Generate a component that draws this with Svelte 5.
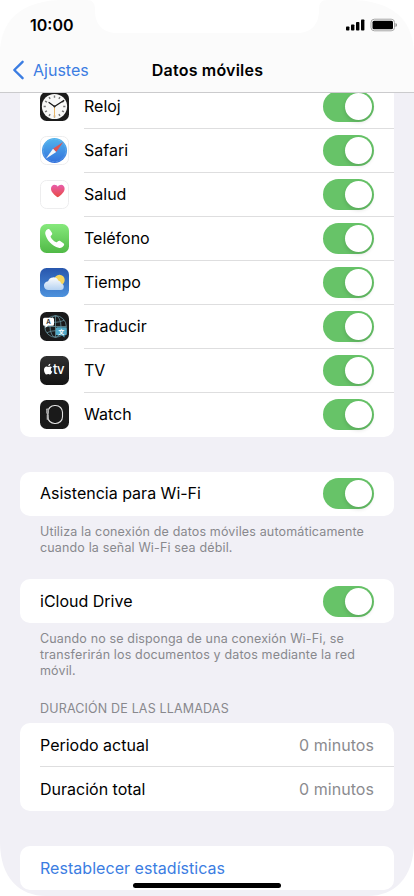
<script lang="ts">
  const apps = [
    {id: 'clock', name: 'Reloj'},
    {id: 'safari', name: 'Safari'},
    {id: 'health', name: 'Salud'},
    {id: 'phone', name: 'Teléfono'},
    {id: 'weather', name: 'Tiempo'},
    {id: 'translate', name: 'Traducir'},
    {id: 'tv', name: 'TV'},
    {id: 'watch', name: 'Watch'}
  ]

  const calls = [
    {label: 'Periodo actual', value: '0 minutos'},
    {label: 'Duración total', value: '0 minutos'}
  ]

  let enabled: Record<string, boolean> = $state({
    clock: true,
    safari: true,
    health: true,
    phone: true,
    weather: true,
    translate: true,
    tv: true,
    watch: true,
    wifi: true,
    icloud: true
  })

  const hours = [0, 30, 60, 90, 120, 150, 180, 210, 240, 270, 300, 330]
</script>

{#snippet toggle(id: string, label: string)}
  <button
    class="toggle"
    class:on={enabled[id]}
    role="switch"
    aria-checked={enabled[id]}
    aria-label={label}
    onclick={() => (enabled[id] = !enabled[id])}
  >
    <span class="knob"></span>
  </button>
{/snippet}

{#snippet icon(id: string)}
  <svg class="icon" viewBox="0 0 29 29">
    {#if id === 'clock'}
      <rect width="29" height="29" rx="6.5" fill="#1b1b1b" />
      <circle cx="14.5" cy="14.5" r="12.6" fill="#f8f8f7" />
      {#each hours as angle}
        <path
          d="M14.5 3.6v2.2"
          stroke="#777"
          stroke-width="1.4"
          transform="rotate({angle} 14.5 14.5)"
        />
      {/each}
      <path d="M14.5 14.5v10.8" stroke="#e9b668" stroke-width="1" />
      <path
        d="M9 10.5l5.5 4 9.3-6"
        fill="none"
        stroke="#151515"
        stroke-width="1.2"
        stroke-linecap="round"
      />
      <circle cx="14.5" cy="14.5" r="1" fill="#222" />
    {:else if id === 'safari'}
      <defs>
        <linearGradient id="sea" x2="0" y2="1">
          <stop stop-color="#52b5ed" />
          <stop offset="1" stop-color="#3370dc" />
        </linearGradient>
      </defs>
      <rect x=".5" y=".5" width="28" height="28" rx="6" fill="#fff" stroke="#ededee" />
      <circle cx="14.5" cy="14.5" r="12.5" fill="url(#sea)" />
      <circle
        cx="14.5"
        cy="14.5"
        r="11.2"
        fill="none"
        stroke="#86bff0"
        stroke-width=".8"
        stroke-dasharray=".5 .9"
      />
      <path d="M23.2 6L13 12.8l3.2 3.3z" fill="#df5551" />
      <path d="M5.8 22.8L13 12.8l3.2 3.3z" fill="#f5f7fa" />
    {:else if id === 'health'}
      <defs>
        <linearGradient id="heart" x2="0" y2="1">
          <stop stop-color="#e85dab" />
          <stop offset="1" stop-color="#e84b43" />
        </linearGradient>
      </defs>
      <rect x=".5" y=".5" width="28" height="28" rx="6" fill="#fff" stroke="#ededee" />
      <path
        d="M17.8 17.3C14.3 14.8 11 12 11 8.7c0-2.2 1.5-3.9 3.5-3.9 1.5 0 2.6.7 3.3 1.9.7-1.2 1.900-1.900 3.300-1.900 2.100 0 3.500 1.700 3.500 3.900 0 3.300-3.300 6.100-6.800 8.600z"
        fill="url(#heart)"
      />
    {:else if id === 'phone'}
      <defs>
        <linearGradient id="call" x2="0" y2="1">
          <stop stop-color="#86e97c" />
          <stop offset="1" stop-color="#50b946" />
        </linearGradient>
      </defs>
      <rect width="29" height="29" rx="6.5" fill="url(#call)" />
      <path
        d="M7.6 5.3c.8-.6 1.7-.4 2.3.4l2 3c.5.8.4 1.5-.2 2.2l-.8.9c-.4.5-.4.9-.1 1.400 1.100 1.900 2.900 3.700 4.900 4.900.5.300.9.300 1.400-.1l.9-.7c.7-.6 1.400-.7 2.200-.2l3.200 2.100c.8.600 1 1.500.4 2.300-1.200 1.900-3 2.900-5.200 2.300C12 21.800 6.700 16.200 5.300 9.900c-.4-1.900.6-3.600 2.300-4.600z"
        fill="#fff"
      />
    {:else if id === 'weather'}
      <defs>
        <linearGradient id="sky" x2="0" y2="1">
          <stop stop-color="#2856ad" />
          <stop offset="1" stop-color="#4d92dd" />
        </linearGradient>
        <linearGradient id="cloud" x2="0" y2="1">
          <stop stop-color="#fcfcfc" />
          <stop offset="1" stop-color="#b5d2f2" />
        </linearGradient>
      </defs>
      <rect width="29" height="29" rx="6.5" fill="url(#sky)" />
      <circle cx="19.5" cy="12" r="5.2" fill="#f6d55e" />
      <path
        d="M8.6 22a4.4 4.4 0 0 1-.5-8.8 5.5 5.5 0 0 1 10.2-.7 3.8 3.8 0 0 1 2.9 3 3.3 3.3 0 0 1-.4 6.5z"
        fill="url(#cloud)"
      />
    {:else if id === 'translate'}
      <rect width="29" height="29" rx="6.5" fill="#1a1a1b" />
      <g fill="none" stroke="#67939e" stroke-width=".8">
        <circle cx="15.5" cy="14.5" r="10.8" />
        <ellipse cx="15.5" cy="14.5" rx="5.5" ry="10.8" />
        <path d="M15.5 3.7v21.6M4.7 14.5h21.6M7 8.3q8.500 4 17 0M7 20.700q8.500-4 17 0" />
      </g>
      <path
        d="M4.5 5.8h8q1.500 0 1.500 1.500v5q0 1.500-1.500 1.500H8l-2.700 2.300v-2.300h-.8Q3 13.800 3 12.300v-5q0-1.500 1.500-1.500z"
        fill="#fff"
      />
      <text x="8.5" y="12.1" font-size="6" font-weight="700" text-anchor="middle" fill="#333">A</text>
      <path
        d="M17.3 15.3h8q1.500 0 1.500 1.500v5q0 1.500-1.500 1.500h-.8v2.300l-2.700-2.300h-4.500q-1.500 0-1.500-1.500v-5q0-1.500 1.500-1.500z"
        fill="#51a9c7"
      />
      <text class="han" x="21.3" y="21.6" font-size="6" font-weight="700" text-anchor="middle" fill="#fff">文</text>
    {:else if id === 'tv'}
      <defs>
        <linearGradient id="screen" x2="0" y2="1">
          <stop stop-color="#303030" />
          <stop offset="1" stop-color="#141414" />
        </linearGradient>
      </defs>
      <rect width="29" height="29" rx="6.5" fill="url(#screen)" />
      <path
        d="M11.9 11.5c-.7.4-1.1 1-1.1 1.9 0 1.1.6 1.8 1.5 2.2-.5 1.5-1.4 2.900-2.500 2.900-.6 0-.9-.4-1.600-.4s-1 .4-1.600.4c-1.300 0-2.600-2.500-2.600-4.600 0-2.100 1.200-3.400 2.600-3.400.7 0 1.200.5 1.700.5s1.100-.5 2-.5c.7 0 1.300.4 1.600 1zM8.300 10.300c-.1-1.300.9-2.300 2-2.500.2 1.300-.8 2.400-2 2.500z"
        fill="#fff"
      />
      <text x="12.9" y="18.4" font-size="13" font-weight="500" textLength="11.6" fill="#fff">tv</text>
    {:else}
      <rect width="29" height="29" rx="6.5" fill="#1a1a1a" />
      <rect x="7.8" y="5.5" width="14.7" height="18" rx="6.8" fill="none" stroke="#e2e2e2" stroke-width="1.1" />
      <rect x="6.2" y="8.5" width="2.8" height="5.3" rx=".7" fill="#b5b5b5" />
      <path d="M7.7 14.5v5.2" stroke="#b5b5b5" stroke-width="2" />
      <path d="M7 10.2h1.3M7 12h1.3" stroke="#444" stroke-width=".5" />
    {/if}
  </svg>
{/snippet}

<div class="screen">
  <header>
    <div class="status">
      <span class="time">10:00</span>
      <svg class="signal" width="52" height="14" viewBox="0 0 52 14">
        <rect x="1" y="8.5" width="3.4" height="4" rx=".8" />
        <rect x="6" y="6.5" width="3.4" height="6" rx=".8" />
        <rect x="11" y="4" width="3.4" height="8.5" rx=".8" />
        <rect x="16" y="1.5" width="3.4" height="11" rx=".8" />
        <rect x="26" y="1.2" width="23.5" height="11.6" rx="3.3" fill="#fff" stroke="#a5a5a5" />
        <rect x="27.5" y="2.7" width="20.5" height="8.6" rx="1.5" />
        <path d="M50.5 5q1.5.6 1.5 2t-1.5 2z" fill="#8d8d8d" />
      </svg>
    </div>
    <nav>
      <button class="back">
        <svg width="13" height="20" viewBox="0 0 13 20">
          <path d="M10.6 1.8L2.3 10l8.3 8.2" />
        </svg>
        <span>Ajustes</span>
      </button>
      <h1>Datos móviles</h1>
    </nav>
  </header>

  <main>
    <section class="card apps">
      {#each apps as app}
        <div class="row">
          {@render icon(app.id)}
          <div class="content">
            <span class="label">{app.name}</span>
            {@render toggle(app.id, app.name)}
          </div>
        </div>
      {/each}
    </section>

    <section class="card wifi">
      <div class="row">
        <div class="content">
          <span class="label">Asistencia para Wi-Fi</span>
          {@render toggle('wifi', 'Asistencia para Wi-Fi')}
        </div>
      </div>
    </section>
    <p class="note">
      Utiliza la conexión de datos móviles automáticamente<br />
      cuando la señal Wi-Fi sea débil.
    </p>

    <section class="card">
      <div class="row">
        <div class="content">
          <span class="label">iCloud Drive</span>
          {@render toggle('icloud', 'iCloud Drive')}
        </div>
      </div>
    </section>
    <p class="note">
      Cuando no se disponga de una conexión Wi-Fi, se<br />
      transferirán los documentos y datos mediante la red<br />
      móvil.
    </p>

    <h2>DURACIÓN DE LAS LLAMADAS</h2>
    <section class="card calls">
      {#each calls as call}
        <div class="row">
          <div class="content">
            <span class="label">{call.label}</span>
            <span class="value">{call.value}</span>
          </div>
        </div>
      {/each}
    </section>

    <section class="card">
      <button class="row reset">Restablecer estadísticas</button>
    </section>
  </main>

  <!-- rounded display corners and the notch -->
  <svg class="bezel" width="414" height="896" viewBox="0 0 414 896">
    <path d="M0 0H63C25 0 0 18 0 54z" />
    <path d="M351 0H414V54C414 18 389 0 351 0z" />
    <path d="M86 0C93 0 95 3 95 10C95 25 103 33 118 33H296C311 33 319 25 319 10C319 3 321 0 328 0z" />
    <path d="M0 842C0 878 20 896 46 896H0z" />
    <path d="M414 842C414 878 394 896 368 896H414z" />
  </svg>
  <div class="home"></div>
</div>

<style>
  :global(body) {
    margin: 0;
    background: #fff;
  }
  .screen {
    position: relative;
    display: flex;
    flex-direction: column;
    width: 414px;
    height: 896px;
    overflow: hidden;
    background: #f1f0f6;
    color: #000;
    font-family: Inter, 'Liberation Sans', sans-serif;
    font-size: 16px;
    letter-spacing: 0;
  }
  button {
    padding: 0;
    border: 0;
    background: none;
    font: inherit;
    letter-spacing: inherit;
    cursor: pointer;
  }
  header {
    flex: none;
    box-sizing: border-box;
    height: 93px;
    border-bottom: 1px solid #cbcbcd;
    background: #fbfbfb;
  }
  .status {
    display: flex;
    align-items: center;
    justify-content: space-between;
    height: 49px;
    padding: 0 17px 0 30px;
  }
  .time {
    font-weight: 600;
  }
  nav {
    display: grid;
    grid-template-columns: 1fr auto 1fr;
    align-items: center;
    height: 42px;
  }
  .back {
    display: flex;
    align-items: center;
    gap: 8px;
    padding-left: 12px;
    color: #3b7de2;
  }
  .back path {
    fill: none;
    stroke: #3b7de2;
    stroke-width: 2.4;
    stroke-linecap: round;
    stroke-linejoin: round;
  }
  .back span,
  h1 {
    padding-bottom: 1px;
  }
  h1 {
    margin: 0;
    padding-left: 1px;
    font-size: 16px;
    font-weight: 600;
    letter-spacing: 0.2px;
  }
  main {
    flex: 1;
    min-height: 0;
    padding: 0 20px;
    overflow: hidden;
  }
  .card {
    overflow: hidden;
    border-radius: 10px;
    background: #fff;
  }
  .apps {
    margin-top: -8.5px;
    margin-bottom: 35px;
  }
  .row {
    display: flex;
    align-items: center;
    height: 44px;
    padding-left: 20px;
  }
  .icon {
    flex: none;
    width: 29px;
    height: 29px;
    margin-right: 15px;
  }
  .han {
    font-family: 'Noto Sans CJK SC', sans-serif;
  }
  .content {
    display: flex;
    flex: 1;
    align-items: center;
    justify-content: space-between;
    box-sizing: border-box;
    height: 44px;
    padding-right: 20px;
  }
  .row:not(:last-child) .content {
    box-shadow: inset 0 -1px #dededf;
  }
  .apps .label,
  .wifi .label {
    padding-bottom: 2px;
  }
  .toggle {
    width: 51px;
    height: 31px;
    padding: 2px;
    border-radius: 16px;
    background: #e5e5ea;
  }
  .toggle.on {
    background: #67c368;
  }
  .knob {
    display: block;
    width: 27px;
    height: 27px;
    border-radius: 50%;
    background: #fff;
    box-shadow: 0 2px 4px rgba(0, 0, 0, 0.14);
  }
  .on .knob {
    margin-left: 20px;
  }
  .note {
    margin: 8px 20px 23.5px;
    color: #88888d;
    font-size: 12.5px;
    letter-spacing: 0.15px;
    line-height: 16px;
    white-space: nowrap;
  }
  h2 {
    margin: -2px 20px 6.5px;
    color: #88888d;
    font-size: 12.5px;
    font-weight: 400;
    letter-spacing: 0.17px;
    line-height: 16px;
  }
  .value {
    color: #8b8b8f;
    letter-spacing: 0.05px;
  }
  .calls {
    margin-bottom: 35px;
  }
  .reset {
    width: 100%;
    padding-left: 20px;
    color: #3b7de2;
    letter-spacing: 0.04px;
  }
  .bezel {
    position: absolute;
    inset: 0;
    fill: #fff;
    pointer-events: none;
  }
  .home {
    position: absolute;
    bottom: 8px;
    left: 133px;
    width: 148px;
    height: 5px;
    border-radius: 3px;
    background: #000;
  }
</style>
